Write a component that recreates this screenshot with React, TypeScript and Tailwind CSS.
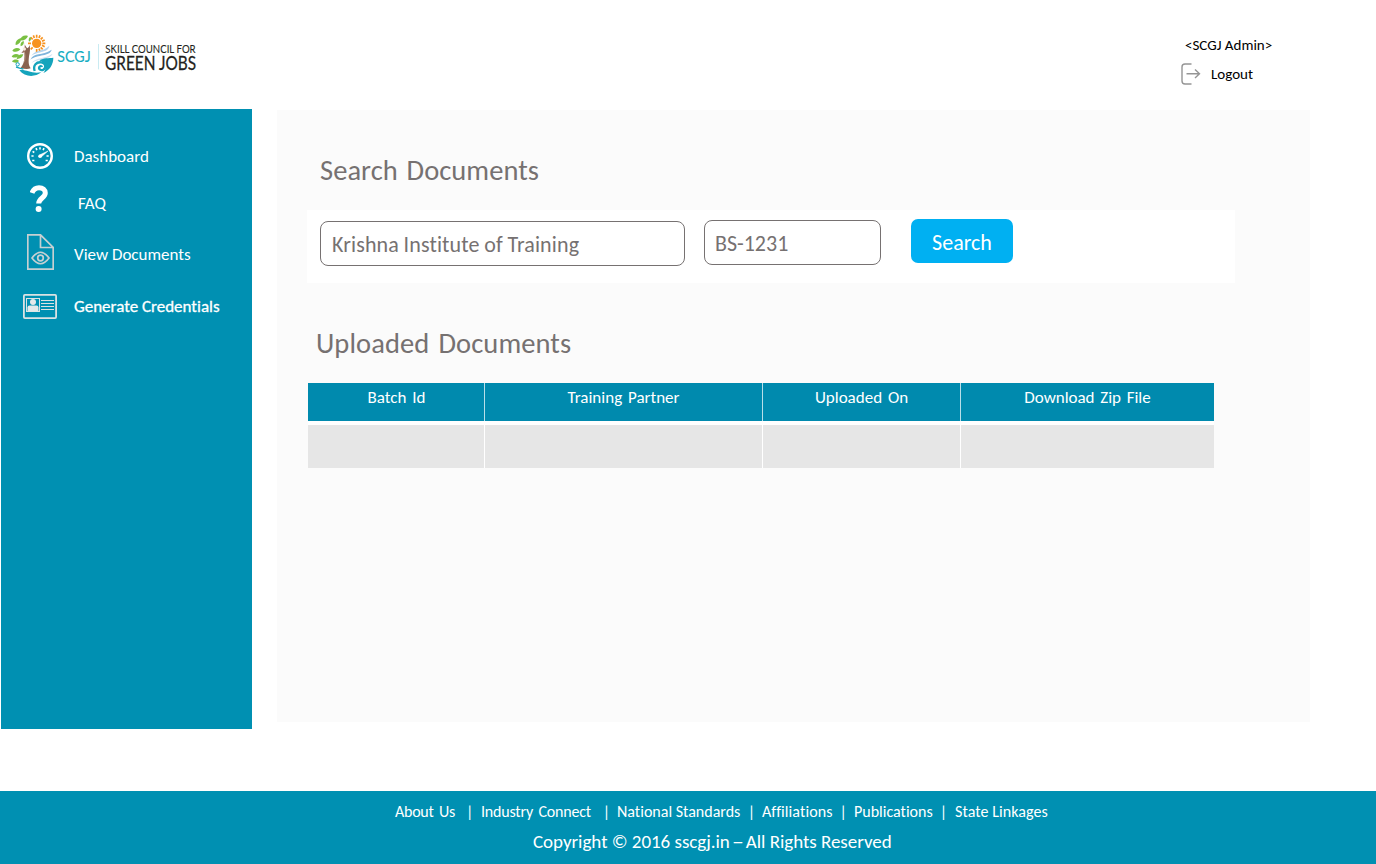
import React from "react";

function Logo() {
  return (
    <svg className="h-[60px] w-[210px] overflow-visible" viewBox="0 0 630 180" fill="none">
      {/* sun */}
      <g stroke="#f7921e" strokeWidth="5">
        <path d="M110 29v9M110 72v9M84 55h9M127 55h9M92 37l6 6M122 67l6 6M128 37l-6 6M98 67l-6 6M100 31l3 8M120 31l-3 8M134 45l-8 4M134 65l-8-4M120 79l-3-8" />
      </g>
      <circle cx="110" cy="55" r="14" fill="#f7921e" />
      {/* leaves */}
      <g fill="#7ac043">
        <path d="M60 46c2-12 13-17 24-13c-3 9-13 15-24 13z" />
        <path d="M47 60c-2-10 6-19 16-20c1 10-6 19-16 20z" />
        <path d="M37 77c5-9 17-10 24-4c-5 8-17 10-24 4z" />
        <path d="M35 95c4-9 15-10 23-5c-4 8-15 10-23 5z" />
        <path d="M36 109c6-7 15-7 21-1c-5 7-15 7-21 1z" />
        <path d="M50 102c1-9 9-15 20-14c-2 9-11 15-20 14z" />
        <path d="M62 64c-2-7 1-14 9-16c2 7-1 14-9 16z" />
        <path d="M87 50c-2-6-1-11 4-15c4 5 2 11-4 15z" />
      </g>
      {/* trunk and figure */}
      <path
        d="M72 52c5 10 2 22-8 32c6-1 8-2 10-4c0 20-1 36-12 48c10 4 20 5 30 2c-8-12-6-24-5-36c3-14 4-22 2-34c-2 6-4 8-7 10c-4-4-8-10-10-18z"
        fill="#8a6350"
      />
      <circle cx="73" cy="72" r="5" fill="#f6e9dd" />
      <path d="M72 79c4 9 4 20 1 31" stroke="#b7937c" strokeWidth="3" />
      {/* streams */}
      <path d="M91 104c12-24 34-10 64-30c-6 22-42 12-64 30z" fill="#7fb4dc" />
      <path d="M94 92c14-20 34-10 54-30c-2 22-34 16-54 30z" fill="#b6d4ee" />
      <path d="M94 114c18-20 38-10 64-28c-8 20-42 14-64 28z" fill="#cfe2f3" />
      {/* wave */}
      <path
        d="M104 138c-6-18 6-28 20-26c13 2 16 16 6 22c-7 4-15-2-12-8c2-4 7-3 8 0"
        stroke="#15a4bc"
        strokeWidth="7"
      />
      <path d="M118 106c14-8 28-6 42-8c0 22-12 38-30 46c10-10 10-28-12-38z" fill="#15a4bc" />
      <path d="M58 136c20-4 36 12 66 6c-20 16-50 14-66-6z" fill="#15a4bc" />
      <path d="M48 126c8 2 14 6 22 6" stroke="#15a4bc" strokeWidth="4" />
      <circle cx="53" cy="118" r="5" stroke="#15a4bc" strokeWidth="3" />
      <g className="font-['Lato',sans-serif]">
        <text x="172" y="112" fontSize="48" fill="#14adc2" stroke="#14adc2" strokeWidth=".4" textLength="100" lengthAdjust="spacingAndGlyphs">
          SCGJ
        </text>
        <text x="316" y="83" fontSize="35" fill="#231f20" stroke="#231f20" strokeWidth=".3" textLength="271" lengthAdjust="spacingAndGlyphs">
          SKILL COUNCIL FOR
        </text>
        <text x="315" y="134" fontSize="56" fill="#231f20" stroke="#231f20" strokeWidth=".8" textLength="273" lengthAdjust="spacingAndGlyphs">
          GREEN JOBS
        </text>
      </g>
      <path d="M295.500 57v76" stroke="#c9ebf2" strokeWidth="3" />
    </svg>
  );
}

function LogoutIcon() {
  return (
    <svg className="h-[22px] w-5" viewBox="0 0 20 22" fill="none" stroke="#959595" strokeWidth="1.400">
      <path d="M10.500 1H4Q1 1 1 4v14q0 3 3 3h6.500M5.500 10.800H18M14 6.500l4.500 4.300L14 15" />
    </svg>
  );
}

function GaugeIcon() {
  return (
    <svg className="size-[26px]" viewBox="0 0 26 26" fill="none" stroke="#fff">
      <circle cx="13" cy="13" r="11.800" strokeWidth="2.400" />
      <path
        d="M13 4.200v2.300M9 5.200l.9 2M17 5.200l-.9 2M5.600 8.300l1.700 1.200M4.400 13h2.200M19.500 13h2.200M5.200 17.500h2.200M18.600 17.500h2.200"
        strokeWidth="1.600"
      />
      <path d="M21 8l-7 6.200-1.600-2.200z" fill="#fff" strokeWidth="0.500" />
      <circle cx="13" cy="13.300" r="1.800" fill="#fff" stroke="none" />
    </svg>
  );
}

function QuestionIcon() {
  return (
    <svg className="mr-[3px] mb-[3px] h-[27px] w-[18px]" viewBox="0 0 18 27" fill="none" stroke="#fff">
      <path d="M2 8C3.200 4.500 5.600 2.700 9 2.700c3.800 0 6.300 2 6.300 5.300c0 4.700-6.600 5.300-6.600 10.400" strokeWidth="5" />
      <circle cx="8.600" cy="24" r="3" fill="#fff" stroke="none" />
    </svg>
  );
}

function DocumentEyeIcon() {
  return (
    <svg className="h-9 w-[27px]" viewBox="0 0 27 36" fill="none" stroke="#c6d0d2" strokeWidth="1.700">
      <path d="M.8 .8h12.700l12.700 12.700v21.700H.8zM13.500 .8v12.700h12.700" />
      <path d="M5 24q8.500-11.500 17 0q-8.500 11.500-17 0z" />
      <circle cx="13.500" cy="24" r="2.800" />
    </svg>
  );
}

function CredentialIcon() {
  return (
    <svg className="h-[25px] w-[34px]" viewBox="0 0 34 25" fill="none" stroke="#dbe2e3">
      <rect x=".9" y=".9" width="32.200" height="23.200" rx="1" strokeWidth="1.800" />
      <rect x="3.500" y="4.500" width="13" height="13" strokeWidth="1" />
      <circle cx="10" cy="8" r="3" fill="#e4e9ea" stroke="none" />
      <path d="M4.500 17.500v-4q0-2 2-2h7q2 0 2 2v4z" fill="#e4e9ea" stroke="none" />
      <path d="M18 6.500h13M18 9.500h13M18 12.500h13M18 15.500h13" strokeWidth="1" />
    </svg>
  );
}

const navItems = [
  { label: "Dashboard", icon: <GaugeIcon />, row: "h-11", text: "pt-0.5" },
  { label: "FAQ", icon: <QuestionIcon />, row: "h-11", text: "ml-1 pt-[7px]" },
  { label: "View Documents", icon: <DocumentEyeIcon />, row: "h-[60px]", text: "pt-1.5" },
  {
    label: "Generate Credentials",
    icon: <CredentialIcon />,
    row: "h-12",
    text: "pt-0.5 [-webkit-text-stroke:0.3px_white]",
  },
];

const columns = [
  { label: "Batch Id", cls: "w-[177px] pl-px" },
  { label: "Training Partner", cls: "w-[278px]" },
  { label: "Uploaded On", cls: "w-[198px]" },
  { label: "Download Zip File", cls: "w-[253px] tracking-[-0.04px]" },
];

const footerLinks = [
  { label: "About Us", cls: "w-[78px] mr-2 tracking-[-0.25px] [word-spacing:2px]" },
  { label: "Industry Connect", cls: "w-[129px] mr-[7px] tracking-[-0.2px] [word-spacing:2px]" },
  { label: "National Standards", cls: "w-[138px] mr-[7px]" },
  { label: "Affiliations", cls: "w-[85px] mr-[7px] tracking-[0.08px]" },
  { label: "Publications", cls: "w-[93px] mr-2" },
  { label: "State Linkages", cls: "tracking-[0.07px]" },
];

export default function App() {
  return (
    <div className="flex h-[864px] w-[1376px] flex-col overflow-hidden bg-white font-['Carlito','Lato',sans-serif] whitespace-nowrap [font-variant-ligatures:none]">
      <header className="flex h-[109px] shrink-0 justify-between pt-[25px] pr-[99px]">
        <Logo />
        <div className="flex w-[92px] flex-col pt-2.5 text-[15px] leading-[20px] text-black">
          <span>&lt;SCGJ Admin&gt;</span>
          <div className="mt-2 -ml-1 flex h-[22px] items-center gap-2.5">
            <LogoutIcon />
            <span>Logout</span>
          </div>
        </div>
      </header>

      <div className="flex h-[682px] shrink-0 pl-px">
        <nav className="flex h-[620px] w-[251px] flex-col bg-[#0090b2] pt-[25px] text-[17px] text-white">
          {navItems.map((n) => (
            <a key={n.label} className={`flex items-center pl-[19px] ${n.row}`}>
              <span className="mr-3.5 flex w-10 shrink-0 justify-center">{n.icon}</span>
              <span className={n.text}>{n.label}</span>
            </a>
          ))}
        </nav>

        <main className="mt-px ml-[25px] h-[612px] w-[1033px] bg-[#fbfbfb] pl-[30px]">
          <h1 className="h-[100px] pt-[41px] pl-[13px] text-[28.5px] leading-[40px] tracking-[0.05px] text-[#767171] [word-spacing:2.300px]">
            Search Documents
          </h1>
          <div className="flex h-[73px] w-[928px] items-start bg-white pt-[9px] pl-[13px] text-[22px] text-[#767171]">
            <div className="mt-0.5 flex h-[45px] w-[365px] items-center rounded-[8px] border border-[#767171] pt-0.5 pl-[11px] tracking-[0.13px] [word-spacing:-0.500px]">
              Krishna Institute of Training
            </div>
            <div className="mt-px ml-[19px] flex h-[45px] w-[177px] items-center rounded-[8px] border border-[#767171] pt-0.5 pl-2.5">
              BS-1231
            </div>
            <button className="ml-[30px] h-11 w-[102px] rounded-[7px] bg-[#00b0f2] pt-0.5 text-white">Search</button>
          </div>
          <h2 className="h-[100px] pt-[41px] pl-[9px] text-[28.5px] leading-[40px] tracking-[0.08px] text-[#767171] [word-spacing:2.700px]">
            Uploaded Documents
          </h2>
          <div className="ml-px w-[906px]">
            <div className="flex h-[38px] bg-[#008aae] text-[17px] leading-[30px] text-white [word-spacing:2px]">
              {columns.map((c) => (
                <div key={c.label} className={`border-r border-[#b9dfe9] text-center last:border-r-0 ${c.cls}`}>
                  {c.label}
                </div>
              ))}
            </div>
            <div className="h-1 bg-white" />
            <div className="flex h-[43px] bg-[#e6e6e6]">
              {columns.map((c) => (
                <div key={c.label} className={`border-r border-white last:border-r-0 ${c.cls}`} />
              ))}
            </div>
          </div>
        </main>
      </div>

      <footer className="h-[73px] shrink-0 bg-[#0090b2] pt-[11px] text-white">
        <div className="flex pl-[395px] text-[16px] leading-[20px]">
          {footerLinks.map((l, i) => (
            <span key={l.label} className={`flex justify-between ${l.cls}`}>
              {l.label}
              {i < footerLinks.length - 1 && <span>|</span>}
            </span>
          ))}
        </div>
        <p className="mt-2 pl-[533px] text-[19px] leading-[24px] tracking-[-0.03px]">
          Copyright © 2016 sscgj.in
          <span className="inline-block w-4 scale-x-125 text-center">–</span>
          All Rights Reserved
        </p>
      </footer>
    </div>
  );
}
